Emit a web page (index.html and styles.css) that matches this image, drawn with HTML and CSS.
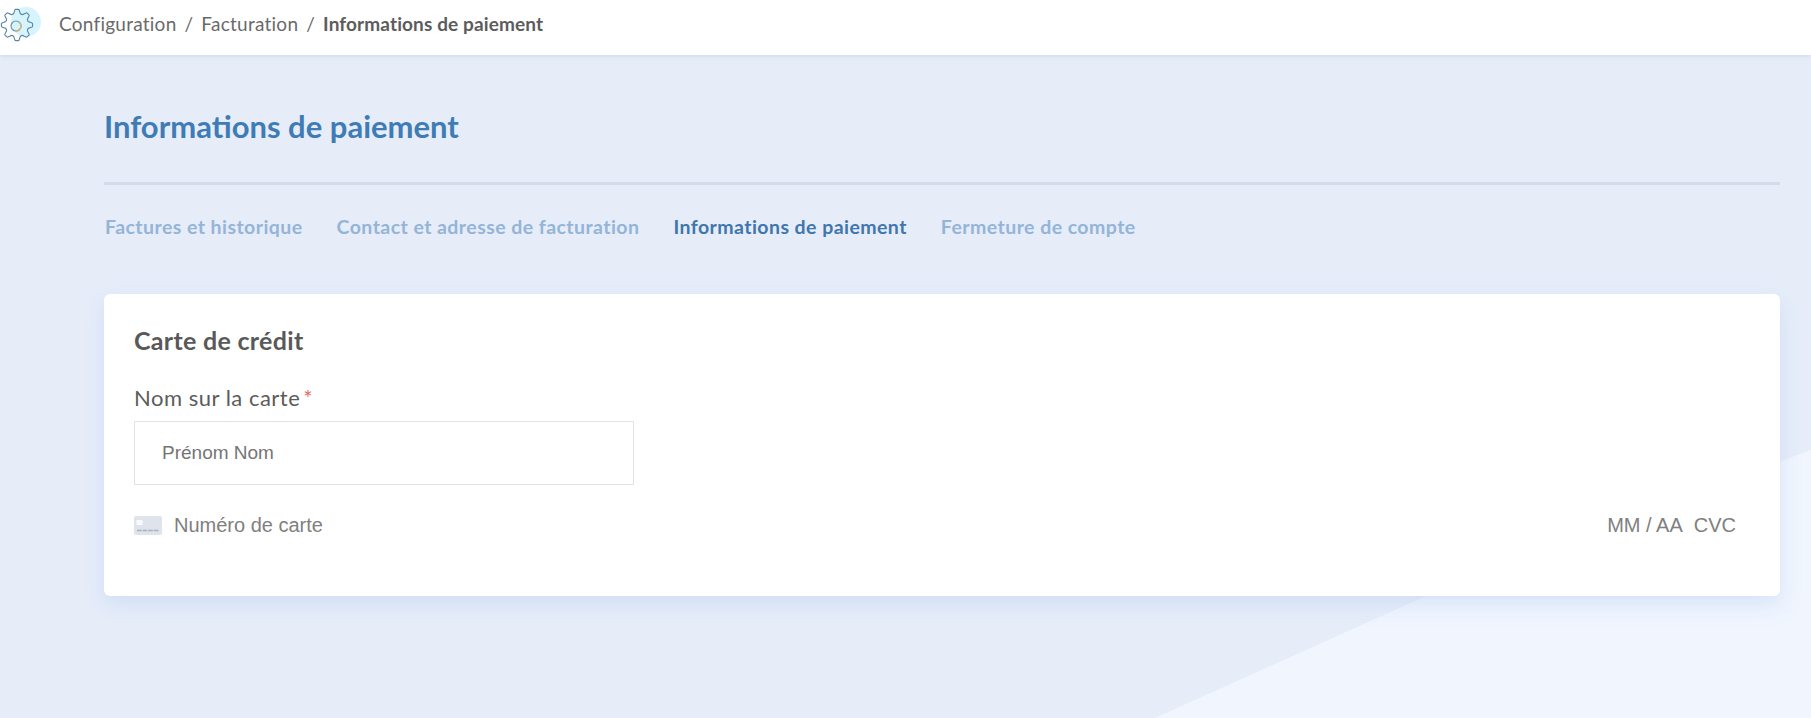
FILE: index.html
```html
<!DOCTYPE html>
<html lang="fr">
<head>
<meta charset="utf-8">
<title>Informations de paiement</title>
<link rel="stylesheet" href="styles.css">
</head>
<body>
<div class="bg-shape"></div>
<header class="topbar">
  <svg class="logo" width="46" height="46" viewBox="0 0 46 46" fill="none">
    <defs>
      <path id="tooth" d="M-4.4-10.62C-3.3-11-3-11.8-2.9-12.6L-2.1-15Q-1.9-15.6-1.3-15.6H1.3Q1.9-15.6 2.1-15L2.9-12.6C3-11.8 3.3-11 4.4-10.62"/>
    </defs>
    <circle cx="26" cy="22" r="15" fill="#d6f4fd"/>
    <g transform="translate(17 25)" stroke="#5a84a6" stroke-width="1.1" stroke-linecap="round" stroke-linejoin="round">
      <use href="#tooth"/>
      <use href="#tooth" transform="rotate(45)"/>
      <use href="#tooth" transform="rotate(90)"/>
      <use href="#tooth" transform="rotate(135)"/>
      <use href="#tooth" transform="rotate(180)"/>
      <use href="#tooth" transform="rotate(225)"/>
      <use href="#tooth" transform="rotate(270)"/>
      <use href="#tooth" transform="rotate(315)"/>
    </g>
    <circle cx="16" cy="26" r="5" stroke="#6b93ad" stroke-width="1.2"/>
    <path d="M19.5 22.5A5.2 5.2 0 0 1 16.5 31.2" stroke="#d8b878" stroke-width="1.4" stroke-linecap="round"/>
  </svg>
  <nav class="crumbs">
    <span>Configuration</span><span class="sep">/</span><span>Facturation</span><span class="sep">/</span><strong>Informations de paiement</strong>
  </nav>
</header>
<main class="page">
  <h1 class="title">Informations de paiement</h1>
  <nav class="tabs">
    <a class="tab">Factures et historique</a>
    <a class="tab">Contact et adresse de facturation</a>
    <a class="tab active">Informations de paiement</a>
    <a class="tab">Fermeture de compte</a>
  </nav>
  <section class="card">
    <h2 class="card-title">Carte de crédit</h2>
    <label class="label">Nom sur la carte<span class="req">*</span></label>
    <div class="input">Prénom Nom</div>
    <div class="cardline">
      <svg class="cc" width="28" height="19" viewBox="0 0 28 19">
        <rect width="28" height="19" rx="2" fill="#dfe3ec"/>
        <rect x="2.5" y="4" width="6" height="5" fill="#fafbfd"/>
        <path d="M3 14.5h22" stroke="#a9b0bf" stroke-width="1.6" stroke-dasharray="4.6 1"/>
      </svg>
      <span class="num">Numéro de carte</span>
      <span class="exp">MM / AA</span>
      <span class="cvc">CVC</span>
    </div>
  </section>
</main>
</body>
</html>
```
FILE: styles.css
```css
html, body { margin: 0; padding: 0; }
body {
  width: 1811px;
  height: 718px;
  overflow: hidden;
  position: relative;
  background: #e6edf9;
  font-family: "Lato", "Noto Sans", sans-serif;
  color: #5a5a5a;
}
.bg-shape {
  position: absolute;
  inset: 0;
  background: #f0f5fe;
  clip-path: polygon(1811px 450px, 1811px 718px, 1155px 718px, 1426px 596px);
}
.topbar {
  position: relative;
  height: 55px;
  background: #fff;
  box-shadow: 0 1px 4px rgba(160, 175, 205, .35);
  display: flex;
  align-items: center;
}
.logo { flex: none; align-self: flex-start; margin-right: 13px; }
.crumbs { font-size: 19px; letter-spacing: .25px; color: #6a6a6a; display: flex; margin-bottom: 9px; }
.crumbs .sep { margin: 0 8px; }
.crumbs strong { font-weight: 700; color: #5c5c5c; letter-spacing: .12px; }
.page { position: relative; padding: 0 31px 0 104px; }
.title {
  margin: 0;
  padding: 51px 0 36px;
  border-bottom: 3px solid #d2dceb;
  font-size: 31px;
  line-height: 40px;
  font-weight: 700;
  color: #3f7cb6;
}
.tabs { display: flex; gap: 34px; padding: 30px 0 0 1px; height: 76px; box-sizing: border-box; }
.tab { font-size: 19.5px; letter-spacing: .44px; line-height: 24px; font-weight: 700; color: #94b4d8; }
.tab.active { color: #3f76ad; }
.card {
  margin-top: 33px;
  height: 302px;
  box-sizing: border-box;
  padding: 30px 30px 0;
  background: #fff;
  border-radius: 6px;
  box-shadow: 0 8px 20px rgba(170, 195, 240, .35);
}
.card-title { margin: 0; font-size: 25px; letter-spacing: .3px; line-height: 32px; font-weight: 700; color: #595959; }
.label { display: block; margin-top: 29px; font-size: 22px; letter-spacing: .5px; line-height: 26px; font-weight: 400; color: #5c5c5c; }
.req { color: #e86a6a; margin-left: 3px; }
.input {
  margin-top: 10px;
  width: 500px;
  height: 64px;
  box-sizing: border-box;
  border: 1px solid #e3e3e3;
  padding: 0 27px;
  display: flex;
  align-items: center;
  font-family: "Liberation Sans", sans-serif;
  font-size: 19px;
  color: #757575;
}
.cardline {
  margin-top: 28px;
  display: flex;
  align-items: center;
  height: 24px;
  padding-right: 14px;
  font-family: "Liberation Sans", sans-serif;
  font-size: 20px;
  color: #808080;
}
.cc { flex: none; }
.num { margin-left: 12px; flex: 1; }
.exp { margin-right: 11px; }
```
